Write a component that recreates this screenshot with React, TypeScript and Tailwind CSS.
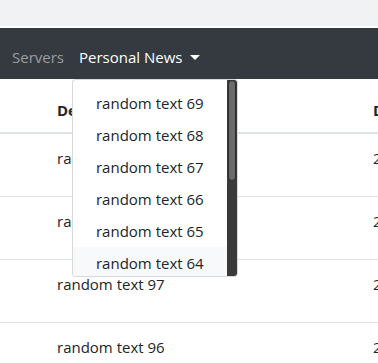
const rows = ["random text 99", "random text 98", "random text 97", "random text 96"];
const menuItems = [69, 68, 67, 66, 65, 64, 63, 62];

function Caret() {
  return (
    <svg width="10" height="5" viewBox="0 0 10 5" className="ml-[8px] mt-[1px]">
      <path d="M0 0 L10 0 L5 5 Z" fill="#ffffff" />
    </svg>
  );
}

function NewsMenu() {
  return (
    <div className="absolute left-[1px] top-full z-10 flex h-[198px] w-[166px] overflow-hidden rounded-[4px] border border-black/15 bg-white">
      <div className="flex-1 overflow-hidden pt-[7px]">
        {menuItems.map((n) => (
          <div
            key={n}
            className={`h-[32px] whitespace-nowrap pl-[23px] pt-[4px] leading-[24px] text-[#212529] ${
              n === 64 ? "bg-[#f8f9fa]" : ""
            }`}
          >
            random text {n}
          </div>
        ))}
      </div>
      <div className="flex w-[10px] flex-col bg-[#3a3a3a] pb-[2px]">
        <div className="mx-[1px] h-[101px] rounded-[5px] border border-[#2a2a2a] bg-[#6b6b6b]" />
      </div>
    </div>
  );
}

export default function App() {
  return (
    <div className="h-[363px] w-[378px] overflow-hidden bg-white font-['Segoe_UI','Open_Sans',sans-serif] text-[15px]">
      <div className="h-[26px] bg-[#f1f2f3]" />
      <div className="h-[2px] bg-white" />
      <nav className="flex h-[51px] items-stretch bg-[#343a40] pl-[12px]">
        <div className="flex items-center pt-[7px] text-white/50">Servers</div>
        <div className="relative ml-[7px] flex items-center px-[8px] pt-[7px] text-white">
          <span>Personal News</span>
          <Caret />
          <NewsMenu />
        </div>
      </nav>
      <div className="leading-[24px] text-[#212529]">
        <div className="flex h-[55px] border-b-2 border-[#dee2e6] pt-[19px] font-bold">
          <div className="w-[373px] shrink-0 pl-[57px]">Description</div>
          <div className="shrink-0 whitespace-nowrap">Date</div>
        </div>
        {rows.map((r) => (
          <div key={r} className="flex h-[63px] border-b border-[#dee2e6] pt-[12px]">
            <div className="w-[373px] shrink-0 whitespace-nowrap pl-[57px]">{r}</div>
            <div className="shrink-0 whitespace-nowrap">2020-01-01</div>
          </div>
        ))}
      </div>
    </div>
  );
}
